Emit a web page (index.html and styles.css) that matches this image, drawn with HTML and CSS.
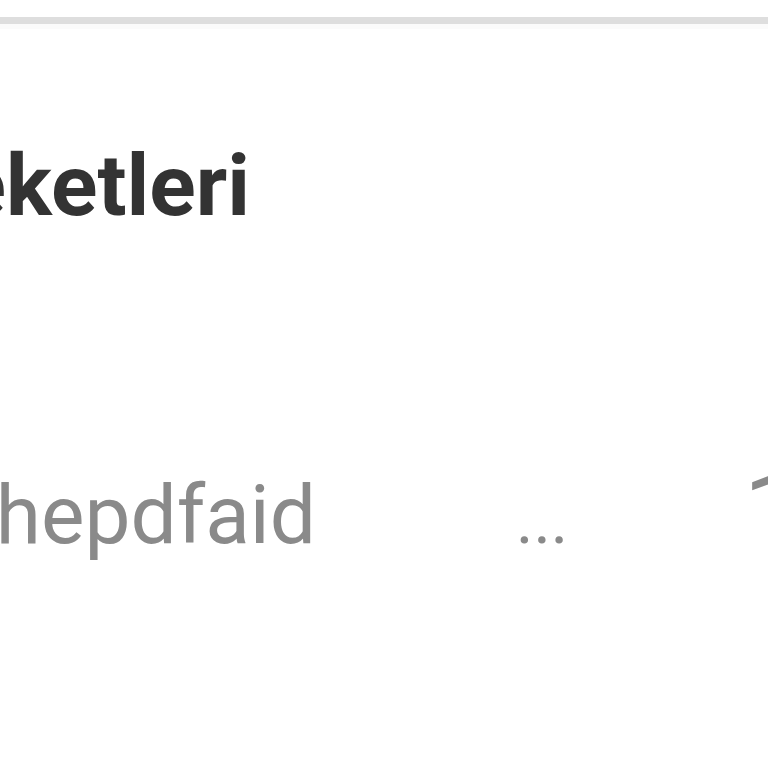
FILE: index.html
```html
<!DOCTYPE html>
<html lang="tr">
<head>
<meta charset="utf-8">
<link rel="stylesheet" href="styles.css">
</head>
<body>
<div class="screen">
  <div class="topbar"></div>
  <div class="title-clip"><h1 class="title">Hareketleri</h1></div>
  <div class="row">
    <div class="name-clip"><span class="name">Dosya_hepdfaid</span></div>
    <span class="more">...</span>
    <span class="amount">1</span>
  </div>
</div>
</body>
</html>
```
FILE: styles.css
```css
html, body {
  margin: 0;
  padding: 0;
  background: #ffffff;
  overflow: hidden;
}
.screen {
  width: 768px;
  height: 768px;
  overflow: hidden;
  font-family: Roboto, "Noto Sans", sans-serif;
  padding-top: 17px;
  box-sizing: border-box;
}
.topbar {
  height: 7px;
  background: #dedede;
  border-bottom: 5px solid #fbfbfb;
}
.title-clip {
  width: 250px;
  overflow: hidden;
  display: flex;
  justify-content: flex-end;
  margin-top: 107px;
}
.title {
  margin: 0;
  font-size: 86px;
  line-height: 100px;
  font-weight: 700;
  color: #333333;
  white-space: nowrap;
}
.row {
  display: flex;
  align-items: baseline;
  margin-top: 224px;
  height: 100px;
  width: 900px;
}
.name-clip {
  width: 316px;
  flex: none;
  overflow: hidden;
  display: flex;
  justify-content: flex-end;
}
.name {
  font-size: 82px;
  line-height: 100px;
  color: #8a8a8a;
  white-space: nowrap;
}
.more {
  margin-left: 200px;
  font-size: 66px;
  line-height: 100px;
  color: #8a8a8a;
  width: 228px;
  flex: none;
}
.amount {
  font-size: 98px;
  line-height: 100px;
  color: #8a8a8a;
}
```
